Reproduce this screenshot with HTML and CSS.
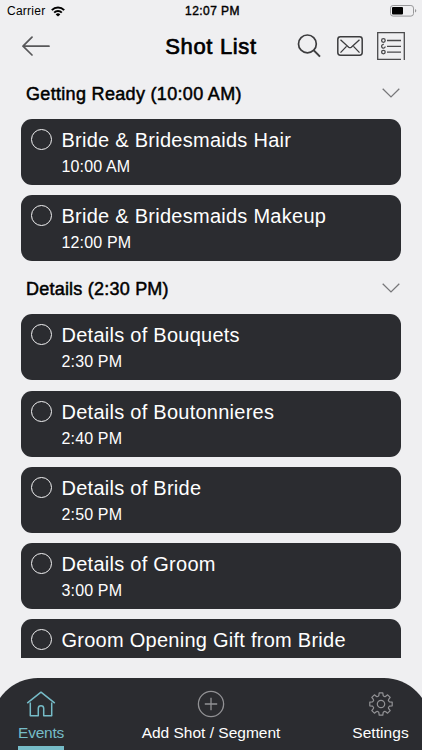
FILE: index.html
```html
<!DOCTYPE html>
<html lang="en">
<head>
  <meta charset="UTF-8" />
  <meta name="viewport" content="width=device-width, initial-scale=1.0"/>
  <title>Shot List</title>
  <link rel="stylesheet" href="styles.css">
</head>
<body>
  <div class="app">
    <div class="status-bar">
      <div class="carrier">
        <span class="carrier-name">Carrier</span>
        <svg width="14" height="11" viewBox="0 0 14 11" fill="none" stroke="#000" stroke-width="2">
          <path d="M0.8 4.1a8.8 8.8 0 0 1 12.4 0"/>
          <path d="M3.2 6.6a5.4 5.4 0 0 1 7.6 0"/>
          <path d="M7 10.6L4.7 8.4a3.3 3.3 0 0 1 4.6 0z" fill="#000" stroke="none"/>
        </svg>
      </div>
      <span class="clock">12:07 PM</span>
      <svg class="battery" width="27" height="12" viewBox="0 0 27 12">
        <rect x="0.5" y="0.5" width="23" height="10.6" rx="2.6" fill="none" stroke="#98989a"/>
        <rect x="2" y="2" width="11" height="7.6" rx="1" fill="#000"/>
        <path d="M25 4v3.6q1.3-.5 1.3-1.8T25 4z" fill="#98989a"/>
      </svg>
    </div>

    <header class="header">
      <svg class="back" width="28" height="20" viewBox="0 0 28 20" fill="none" stroke="#58585a" stroke-width="1.7" stroke-linecap="round" stroke-linejoin="round">
        <path d="M27 10.2H1M10 1.2L1 10.2l9 8.8"/>
      </svg>
      <h1>Shot List</h1>
      <div class="actions">
        <svg class="search" width="24" height="24" viewBox="0 0 24 24" fill="none" stroke="#3c3c3e" stroke-width="1.7">
          <circle cx="10.4" cy="9.9" r="8.9"/>
          <path d="M16.8 16.4l6.2 6.2" stroke-width="2"/>
        </svg>
        <svg width="26" height="20" viewBox="0 0 26 20" fill="none" stroke="#3c3c3e" stroke-width="1.5">
          <rect x="0.8" y="0.8" width="24.4" height="18.4" rx="2.6"/>
          <path d="M3.5 3.8l8.2 7.4q1.3 1 2.6 0l8.2-7.4M3.5 16.6l6-6.2M22.5 16.6l-6-6.2" stroke-width="1.3"/>
        </svg>
        <svg width="28" height="28" viewBox="0 0 28 28" fill="none" stroke="#4a4a4c" stroke-width="1.3">
          <path d="M24 27.3H.7V.7h26.6v27.3"/>
          <path d="M10 8.5h14M10 14.3h14M10 20.1h14"/>
          <circle cx="6.4" cy="8.5" r="1.8"/>
          <path d="M6.8 12.5a1.8 1.8 0 1 0 1.4 2"/>
          <circle cx="6.4" cy="20.1" r="1.8"/>
        </svg>
      </div>
    </header>

    <main class="shot-list">
      <div class="segment">
        <h2 class="seg-ready">Getting Ready (10:00 AM)</h2>
        <svg class="chevron" width="18" height="10" viewBox="0 0 18 10"><path d="M.7.8L9 8.9 17.3.8"/></svg>
      </div>
      <div class="shots">
        <div class="shot">
          <span class="check"></span>
          <div><p class="name">Bride &amp; Bridesmaids Hair</p><p class="time">10:00 AM</p></div>
        </div>
        <div class="shot">
          <span class="check"></span>
          <div><p class="name">Bride &amp; Bridesmaids Makeup</p><p class="time">12:00 PM</p></div>
        </div>
      </div>

      <div class="segment">
        <h2 class="seg-details">Details (2:30 PM)</h2>
        <svg class="chevron" width="18" height="10" viewBox="0 0 18 10"><path d="M.7.8L9 8.9 17.3.8"/></svg>
      </div>
      <div class="shots">
        <div class="shot">
          <span class="check"></span>
          <div><p class="name">Details of Bouquets</p><p class="time">2:30 PM</p></div>
        </div>
        <div class="shot">
          <span class="check"></span>
          <div><p class="name">Details of Boutonnieres</p><p class="time">2:40 PM</p></div>
        </div>
        <div class="shot">
          <span class="check"></span>
          <div><p class="name">Details of Bride</p><p class="time">2:50 PM</p></div>
        </div>
        <div class="shot">
          <span class="check"></span>
          <div><p class="name">Details of Groom</p><p class="time">3:00 PM</p></div>
        </div>
        <div class="shot">
          <span class="check"></span>
          <div><p class="name">Groom Opening Gift from Bride</p></div>
        </div>
      </div>
    </main>

    <nav class="tab-bar">
      <a class="tab active">
        <svg width="30" height="28" viewBox="0 0 30 28" fill="none" stroke="#76bcc8" stroke-width="1.5" stroke-linejoin="round">
          <path d="M1.2 13.2L15 2.2l13.8 11"/>
          <path d="M4.3 12.6v13.2h8v-7.4q0-2.6 2.7-2.6t2.7 2.6v7.4h8V12.6"/>
        </svg>
        <span>Events</span>
      </a>
      <a class="tab add">
        <svg width="28" height="28" viewBox="0 0 28 28" fill="none" stroke="#929295" stroke-width="1.3">
          <circle cx="14" cy="14" r="12.6"/>
          <path d="M14 7.8v12.4M7.8 14h12.4"/>
        </svg>
        <span>Add Shot / Segment</span>
      </a>
      <a class="tab settings">
        <svg width="28" height="28" viewBox="-14 -14 28 28" fill="none" stroke="#929295" stroke-width="1.2" stroke-linejoin="round">
          <path d="M-2.2-8.4L-1.8-11.2H1.8L2.2-8.4Q3.6-6.8 4.4-7.5L6.6-9.2 9.2-6.6 7.5-4.4Q6.8-3.6 8.4-2.2L11.2-1.8V1.8L8.4 2.2Q6.8 3.6 7.5 4.4L9.2 6.6 6.6 9.2 4.4 7.5Q3.6 6.8 2.2 8.4L1.8 11.2H-1.8L-2.2 8.4Q-3.6 6.8-4.4 7.5L-6.6 9.2-9.2 6.6-7.5 4.4Q-6.8 3.6-8.4 2.2L-11.2 1.8V-1.8L-8.4-2.2Q-6.8-3.6-7.5-4.4L-9.2-6.6-6.6-9.2-4.4-7.5Q-3.6-6.8-2.2-8.4z"/>
          <circle r="3.7"/>
        </svg>
        <span>Settings</span>
      </a>
    </nav>
  </div>
</body>
</html>
```
FILE: styles.css
```css
* {
  margin: 0;
  padding: 0;
  box-sizing: border-box;
}

body {
  font-family: "Liberation Sans", Arial, sans-serif;
  background: #efeff1;
  color: #000;
  overflow: hidden;
}

svg {
  display: block;
  flex: none;
}

.app {
  width: 422px;
  height: 750px;
  display: flex;
  flex-direction: column;
  overflow: hidden;
}

/* Status bar */
.status-bar {
  height: 22px;
  padding: 0 5px 0 7px;
  display: grid;
  grid-template-columns: 1fr auto 1fr;
  align-items: center;
}

.carrier {
  display: flex;
  align-items: center;
  gap: 6px;
  font-size: 12px;
  letter-spacing: 0.25px;
}

.clock {
  margin-left: 1px;
  font-size: 12px;
  letter-spacing: 0.45px;
  -webkit-text-stroke: 0.4px #000;
}

.battery {
  justify-self: end;
}

/* Header */
.header {
  height: 50px;
  padding: 0 17px 2px;
  display: grid;
  grid-template-columns: 1fr auto 1fr;
  align-items: center;
}

.back {
  margin-left: 5px;
}

h1 {
  font-size: 22px;
  font-weight: normal;
  line-height: 28px;
  letter-spacing: 0.65px;
  padding-top: 2px;
  -webkit-text-stroke: 0.7px #000;
}

.actions {
  display: flex;
  align-items: center;
  justify-content: flex-end;
  gap: 14px;
}

.search {
  margin-right: 2px;
}

/* Shot list */
.shot-list {
  height: 586px;
  padding: 0 21px;
  overflow: hidden;
}

.segment {
  height: 47px;
  padding: 0 1px 5px 5px;
  display: flex;
  align-items: center;
  justify-content: space-between;
}

.shots + .segment {
  height: 53px;
  padding-bottom: 0;
}

.segment h2 {
  padding-top: 2px;
  font-size: 18px;
  font-weight: normal;
  -webkit-text-stroke: 0.5px #000;
}

.segment .seg-ready {
  letter-spacing: 0.32px;
}

.segment .seg-details {
  padding-top: 3px;
  letter-spacing: 0.22px;
}

.chevron path {
  fill: none;
  stroke: #77777a;
  stroke-width: 1.3;
}

.shots {
  display: flex;
  flex-direction: column;
  gap: 10.3px;
}

.shot {
  height: 66px;
  flex: none;
  display: flex;
  gap: 9.5px;
  padding: 9px 10px;
  border-radius: 11px;
  background: #2b2c30;
  color: #fff;
}

.check {
  width: 21px;
  height: 21px;
  margin-top: 1px;
  flex: none;
  border: 1.4px solid #f2f2f3;
  border-radius: 50%;
}

.name {
  font-size: 20px;
  line-height: 24px;
  letter-spacing: 0.26px;
}

.time {
  font-size: 16px;
  line-height: 20px;
  letter-spacing: 0.15px;
  margin-top: 5px;
}

/* Bottom tabs */
.tab-bar {
  height: 72px;
  flex: none;
  margin: auto -8px 0;
  padding: 12px 21px 0 26px;
  display: grid;
  grid-template-columns: 46px 1fr 57px;
  border-radius: 46px 46px 0 0;
  background: #2b2c30;
}

.tab {
  display: flex;
  flex-direction: column;
  align-items: center;
  color: #fff;
  font-size: 15.5px;
  line-height: 20px;
  white-space: nowrap;
}

.tab span {
  margin-top: 5px;
}

.add {
  padding-left: 6px;
}

.settings {
  letter-spacing: 0.05px;
}

.tab.active {
  color: #76bcc8;
  letter-spacing: -0.25px;
}

.active::after {
  content: "";
  width: 100%;
  height: 4px;
  margin-top: 3px;
  background: #76bcc8;
}
```
